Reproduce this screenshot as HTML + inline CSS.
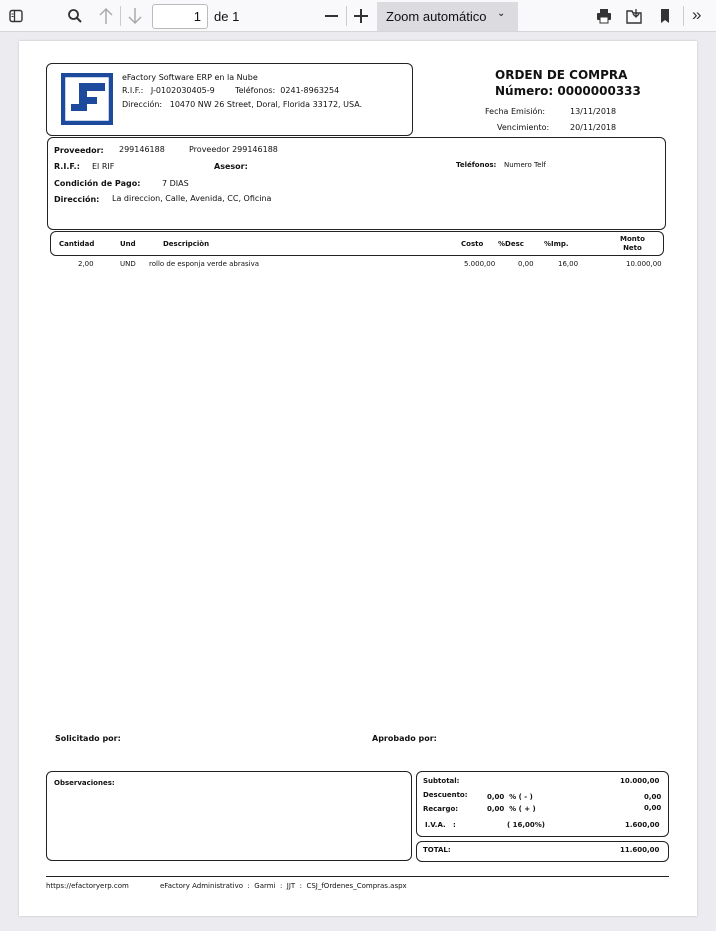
<!DOCTYPE html>
<html><head><meta charset="utf-8"><style>
*{margin:0;padding:0;box-sizing:border-box}
body{width:716px;height:931px;background:#ececf0;font-family:"DejaVu Sans","Liberation Sans",sans-serif;position:relative;overflow:hidden;color:#111}
.tb{position:absolute;left:0;top:0;width:716px;height:32px;background:#f9f9fb;border-bottom:1px solid #d6d6d8;font-family:"Liberation Sans",sans-serif}
.page{position:absolute;left:19px;top:41px;width:678px;height:875px;background:#fff;box-shadow:0 0 2px rgba(0,0,0,.2)}
.a{position:absolute;white-space:nowrap}
.box{position:absolute;border:1.3px solid #222;border-radius:6px}
.s{font-size:8px}
.b{font-weight:bold}
.t{font-size:7px}
</style></head><body>
<div class="tb">
<svg class="a" style="left:9px;top:9px" width="14" height="14" viewBox="0 0 14 14"><rect x="1" y="1.5" width="12" height="11" rx="2" fill="none" stroke="#333" stroke-width="1.4"/><line x1="5.5" y1="2" x2="5.5" y2="12" stroke="#333" stroke-width="1.3"/><line x1="2.5" y1="5" x2="4.5" y2="5" stroke="#333"/><line x1="2.5" y1="7.5" x2="4.5" y2="7.5" stroke="#333"/></svg>
<svg class="a" style="left:67px;top:8px" width="16" height="16" viewBox="0 0 16 16"><circle cx="6.5" cy="6.5" r="4.5" fill="none" stroke="#333" stroke-width="1.8"/><line x1="10" y1="10" x2="14" y2="14" stroke="#333" stroke-width="2"/></svg>
<svg class="a" style="left:98px;top:7px" width="16" height="18" viewBox="0 0 16 18"><path d="M8 2v15M2 8l6-6 6 6" fill="none" stroke="#aaa" stroke-width="1.5"/></svg>
<div class="a" style="left:120px;top:6px;width:1px;height:20px;background:#ccc"></div>
<svg class="a" style="left:127px;top:7px" width="16" height="18" viewBox="0 0 16 18"><path d="M8 1v15M2 10l6 6 6-6" fill="none" stroke="#aaa" stroke-width="1.5"/></svg>
<div class="a" style="left:152px;top:4px;width:56px;height:25px;border:1px solid #bbb;border-radius:3px;background:#fff;font-size:13px;text-align:right;padding:4px 6px 0 0">1</div>
<div class="a" style="left:214px;top:9px;font-size:13px">de 1</div>
<div class="a" style="left:325px;top:15px;width:13px;height:2px;background:#333"></div>
<div class="a" style="left:346px;top:6px;width:1px;height:20px;background:#ccc"></div>
<div class="a" style="left:354px;top:15px;width:14px;height:2px;background:#333"></div><div class="a" style="left:360px;top:9px;width:2px;height:14px;background:#333"></div>
<div class="a" style="left:377px;top:2px;width:141px;height:29px;background:#dcdce0;font-size:13px;padding:7px 0 0 9px">Zoom automático<span style="position:absolute;left:120px;top:6px;font-size:10px">&#x2304;</span></div>
<svg class="a" style="left:596px;top:8px" width="16" height="16" viewBox="0 0 16 16"><rect x="4" y="1" width="8" height="4" fill="#333"/><rect x="1" y="5" width="14" height="7" rx="1" fill="#333"/><rect x="4" y="9" width="8" height="6" fill="#fff" stroke="#333"/></svg>
<svg class="a" style="left:626px;top:8px" width="16" height="16" viewBox="0 0 16 16"><path d="M1 3h5l1 2h8v10H1z" fill="none" stroke="#333" stroke-width="1.4"/><path d="M10 1v8M7 6l3 3 3-3" fill="none" stroke="#333" stroke-width="1.3"/></svg>
<svg class="a" style="left:659px;top:8px" width="12" height="16" viewBox="0 0 12 16"><path d="M2 1h8v14l-4-3-4 3z" fill="#333"/></svg>
<div class="a" style="left:683px;top:6px;width:1px;height:20px;background:#ccc"></div>
<div class="a" style="left:692px;top:5px;font-size:17px;color:#333">&raquo;</div>
</div>
<div class="page"></div>

<div class="box" style="left:46px;top:63px;width:367px;height:73px"></div>
<svg class="a" style="left:61px;top:73px" width="52" height="52" viewBox="0 0 52 52"><rect x="2" y="2" width="48" height="48" fill="none" stroke="#1d4a9c" stroke-width="4.5"/><path d="M18 10H44V18H26V24H36V31H26V38H10V31H18Z" fill="#1d4a9c"/></svg>
<div class="a s" style="left:122px;top:73px">eFactory Software ERP en la Nube</div>
<div class="a s" style="left:122px;top:86px">R.I.F.:&nbsp;&nbsp; J-0102030405-9&nbsp;&nbsp;&nbsp;&nbsp;&nbsp;&nbsp;&nbsp; Teléfonos:&nbsp; 0241-8963254</div>
<div class="a s" style="left:122px;top:100px">Dirección:&nbsp;&nbsp; 10470 NW 26 Street, Doral, Florida 33172, USA.</div>
<div class="a b" style="left:495px;top:68px;font-size:12px">ORDEN DE COMPRA</div>
<div class="a b" style="left:495px;top:84px;font-size:12px">Número: 0000000333</div>
<div class="a s" style="left:485px;top:107px">Fecha Emisión:</div><div class="a s" style="left:570px;top:107px">13/11/2018</div>
<div class="a s" style="left:497px;top:123px">Vencimiento:</div><div class="a s" style="left:570px;top:123px">20/11/2018</div>

<div class="box" style="left:47px;top:137px;width:619px;height:93px"></div>
<div class="a s b" style="left:54px;top:146px">Proveedor:</div><div class="a s" style="left:119px;top:145px">299146188</div><div class="a s" style="left:189px;top:145px">Proveedor 299146188</div>
<div class="a s b" style="left:54px;top:162px">R.I.F.:</div><div class="a s" style="left:92px;top:162px">El RIF</div><div class="a s b" style="left:214px;top:162px">Asesor:</div>
<div class="a t b" style="left:456px;top:161px">Teléfonos:</div><div class="a t" style="left:504px;top:161px">Numero Telf</div>
<div class="a s b" style="left:54px;top:179px">Condición de Pago:</div><div class="a s" style="left:162px;top:179px">7 DIAS</div>
<div class="a s b" style="left:54px;top:195px">Dirección:</div><div class="a s" style="left:112px;top:194px">La direccion, Calle, Avenida, CC, Oficina</div>

<div class="box" style="left:50px;top:231px;width:614px;height:25px"></div>
<div class="a t b" style="left:59px;top:240px">Cantidad</div><div class="a t b" style="left:120px;top:240px">Und</div><div class="a t b" style="left:163px;top:240px">Descripciòn</div>
<div class="a t b" style="left:461px;top:240px">Costo</div><div class="a t b" style="left:498px;top:240px">%Desc</div><div class="a t b" style="left:544px;top:240px">%Imp.</div>
<div class="a t b" style="left:620px;top:235px;text-align:center;line-height:9px">Monto<br>Neto</div>
<div class="a t" style="left:78px;top:260px">2,00</div><div class="a t" style="left:120px;top:260px">UND</div><div class="a t" style="left:149px;top:260px">rollo de esponja verde abrasiva</div>
<div class="a t" style="left:464px;top:260px">5.000,00</div><div class="a t" style="left:518px;top:260px">0,00</div><div class="a t" style="left:558px;top:260px">16,00</div><div class="a t" style="left:626px;top:260px">10.000,00</div>

<div class="a s b" style="left:55px;top:734px">Solicitado por:</div>
<div class="a s b" style="left:372px;top:734px">Aprobado por:</div>

<div class="box" style="left:46px;top:771px;width:366px;height:90px"></div>
<div class="a t b" style="left:54px;top:779px">Observaciones:</div>
<div class="box" style="left:416px;top:771px;width:253px;height:66px"></div>
<div class="a t b" style="left:423px;top:777px">Subtotal:</div><div class="a t b" style="left:620px;top:777px">10.000,00</div>
<div class="a t b" style="left:423px;top:791px">Descuento:</div><div class="a t b" style="left:487px;top:793px">0,00&nbsp; % ( - )</div><div class="a t b" style="left:644px;top:793px">0,00</div>
<div class="a t b" style="left:423px;top:805px">Recargo:</div><div class="a t b" style="left:487px;top:805px">0,00&nbsp; % ( + )</div><div class="a t b" style="left:644px;top:804px">0,00</div>
<div class="a t b" style="left:425px;top:821px">I.V.A.&nbsp;&nbsp; :</div><div class="a t b" style="left:507px;top:821px">( 16,00%)</div><div class="a t b" style="left:625px;top:821px">1.600,00</div>
<div class="box" style="left:416px;top:841px;width:253px;height:21px"></div>
<div class="a t b" style="left:423px;top:846px">TOTAL:</div><div class="a t b" style="left:620px;top:846px">11.600,00</div>

<div class="a" style="left:46px;top:876px;width:623px;height:1px;background:#222"></div>
<div class="a t" style="left:46px;top:882px">https://efactoryerp.com</div>
<div class="a t" style="left:160px;top:882px">eFactory Administrativo&nbsp; :&nbsp; Garmi&nbsp; :&nbsp; JJT&nbsp; :&nbsp; CSJ_fOrdenes_Compras.aspx</div>
</body></html>
